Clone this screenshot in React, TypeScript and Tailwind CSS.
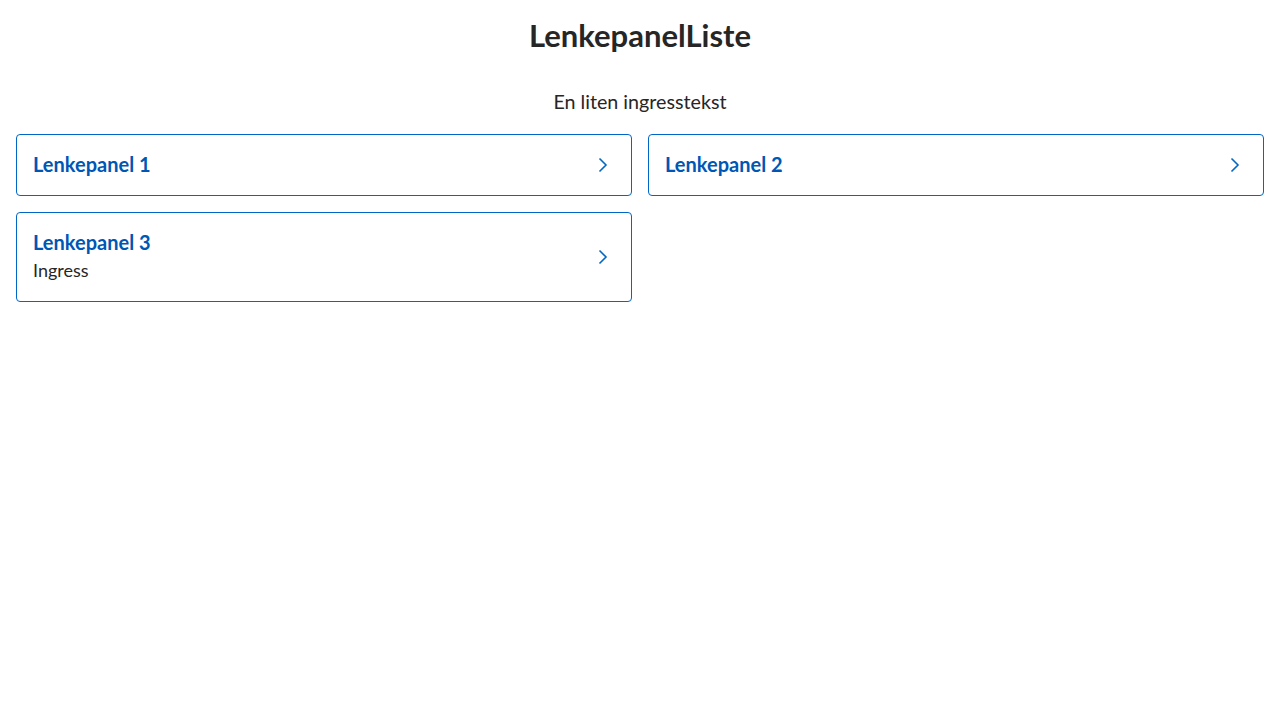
import React from 'react';

const Chevron = () => (
  <svg width="24" height="24" viewBox="0 0 24 24" fill="none" className="shrink-0 text-[#0067c5]">
    <path d="M8.5 5.5 15 12l-6.5 6.5" stroke="currentColor" strokeWidth="1.6" />
  </svg>
);

const panels = [
  { title: 'Lenkepanel 1' },
  { title: 'Lenkepanel 2' },
  { title: 'Lenkepanel 3', ingress: 'Ingress' },
];

const App = () => {
  return (
    <div className="min-h-screen bg-white p-4 text-[#262626] font-['Lato','Noto_Sans',sans-serif]">
      <h1 className="text-center text-[31px] font-bold leading-[38px] mt-0">LenkepanelListe</h1>
      <p className="text-center text-[19.7px] leading-7 mt-[34px] mb-[18px]">En liten ingresstekst</p>
      <div className="grid grid-cols-2 gap-4 items-start">
        {panels.map((p) => (
          <a key={p.title} href="#" className="flex items-center justify-between border border-[#0067c5] rounded px-4 py-4">
            <div className="flex flex-col -translate-y-px">
              <span className="text-[20px] font-bold leading-[28px] text-[#0056b4]">{p.title}</span>
              {p.ingress && <span className="text-[18px] leading-[28px]">{p.ingress}</span>}
            </div>
            <Chevron />
          </a>
        ))}
      </div>
    </div>
  );
};

export default App;
